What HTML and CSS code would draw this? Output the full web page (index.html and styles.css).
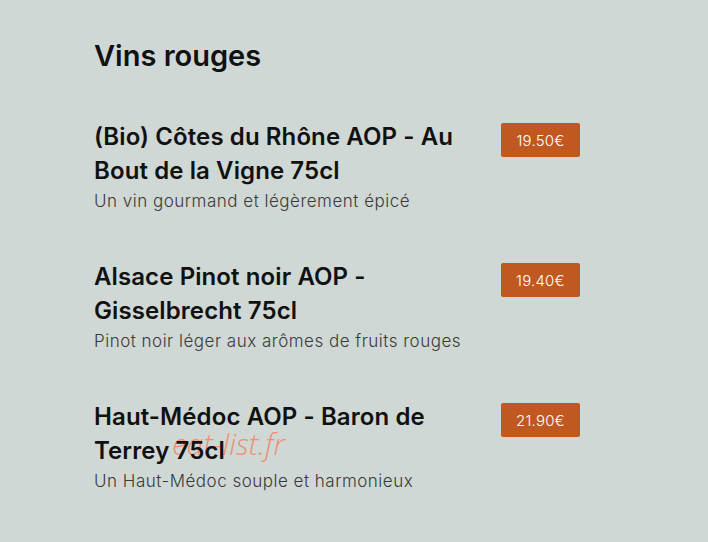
FILE: index.html
```html
<!DOCTYPE html>
<html lang="fr">
<head>
    <meta charset="UTF-8">
    <meta name="viewport" content="width=device-width, initial-scale=1.0">
    <title>Vins rouges</title>
    <link rel="stylesheet" href="styles.css">
</head>
<body>
    <div class="container">
        <h2 class="section-title">Vins rouges</h2>
        <div class="menu-item">
            <div class="item-info">
                <h3 class="item-name">(Bio) Côtes du Rhône AOP - Au Bout de la Vigne 75cl</h3>
                <p class="item-desc">Un vin gourmand et légèrement épicé</p>
            </div>
            <span class="item-price">19.50€</span>
        </div>
        <div class="menu-item">
            <div class="item-info">
                <h3 class="item-name">Alsace Pinot noir AOP - Gisselbrecht 75cl</h3>
                <p class="item-desc">Pinot noir léger aux arômes de fruits rouges</p>
            </div>
            <span class="item-price">19.40€</span>
        </div>
        <div class="menu-item">
            <div class="item-info">
                <h3 class="item-name">Haut-Médoc AOP - Baron de Terrey 75cl</h3>
                <p class="item-desc">Un Haut-Médoc souple et harmonieux</p>
            </div>
            <span class="item-price">21.90€</span>
        </div>
        <span class="watermark">eat-list.fr</span>
    </div>
</body>
</html>
```

FILE: styles.css
```css
body {
    margin: 0;
    font-family: Inter, "Noto Sans", sans-serif;
    background-color: #d0d8d5;
    color: #111111;
}
.container {
    position: relative;
    width: 486px;
    padding: 36px 0 0 94px;
}
.section-title {
    margin: 0 0 44px;
    font-size: 29px;
    font-weight: 600;
    line-height: 40px;
}
.menu-item {
    display: flex;
    justify-content: space-between;
    align-items: flex-start;
    height: 140px;
}
.item-info {
    width: 372px;
}
.item-name {
    margin: 0;
    font-size: 24px;
    font-weight: 600;
    line-height: 34px;
    letter-spacing: 0.1px;
}
.item-desc {
    margin: 0;
    font-size: 17px;
    font-weight: 300;
    color: #3a3a3a;
    line-height: 26px;
    letter-spacing: 0.5px;
}
.item-price {
    width: 79px;
    height: 34px;
    margin-top: 3px;
    display: flex;
    align-items: center;
    justify-content: center;
    background-color: #c0581f;
    color: #ffffff;
    font-size: 15px;
    font-weight: 300;
    border-radius: 2px;
    letter-spacing: 0.2px;
}
.watermark {
    position: absolute;
    z-index: -1;
    left: 172px;
    top: 423px;
    font-size: 30px;
    font-style: italic;
    font-weight: 300;
    font-family: "Open Sans", sans-serif;
    color: #ee9070;
}
```
